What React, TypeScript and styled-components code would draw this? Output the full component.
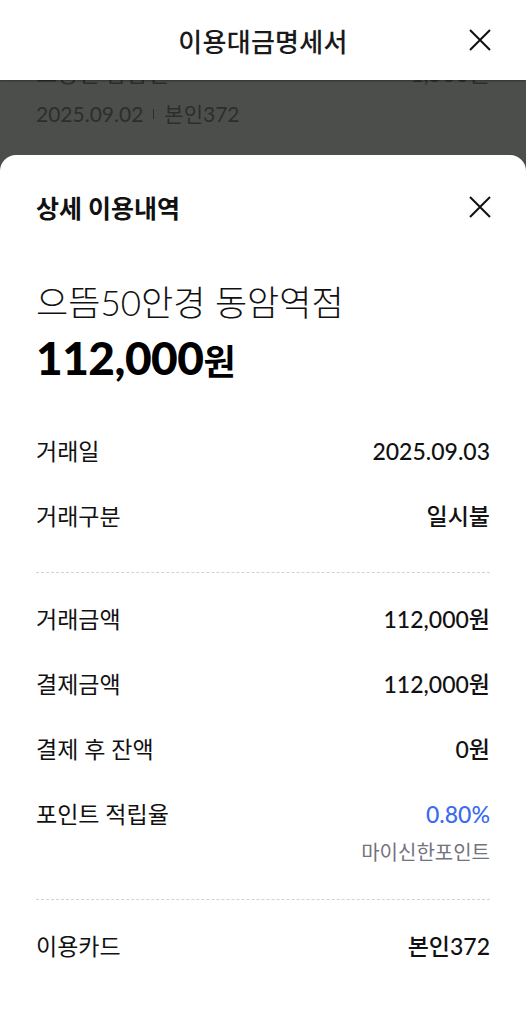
import styled, { createGlobalStyle } from "styled-components";

const GlobalStyle = createGlobalStyle`
  html, body {
    margin: 0;
    padding: 0;
    background: #4b4e4b;
  }
  body {
    font-family: Lato, "Noto Sans CJK KR", sans-serif;
    color: #111;
  }
`;

const Page = styled.div`
  width: 526px;
  height: 1024px;
  display: flex;
  flex-direction: column;
  overflow: hidden;
  background: #4b4e4b;
`;

const TopBar = styled.header`
  height: 80px;
  flex-shrink: 0;
  display: flex;
  align-items: center;
  justify-content: center;
  position: relative;
  background: #fff;
  box-shadow: 0 1px 2px rgba(0, 0, 0, 0.35);
  z-index: 2;
`;

const TopTitle = styled.h1`
  margin: 0;
  font-size: 26px;
  font-weight: 500;
  letter-spacing: 0.3px;
  color: #1a1a1a;
`;

const CloseButton = styled.button<{ top: number }>`
  position: absolute;
  right: 32px;
  top: ${(props) => props.top}px;
  width: 28px;
  height: 28px;
  padding: 0;
  border: 0;
  background: none;
  display: flex;
  align-items: center;
  justify-content: center;
`;

const Backdrop = styled.div`
  height: 75px;
  flex-shrink: 0;
  overflow: hidden;
  padding: 0 36px;
  color: #2b2e2b;
`;

const BackdropRow = styled.div`
  display: flex;
  justify-content: space-between;
  align-items: center;
  margin-top: -22px;
  line-height: 30px;
  font-size: 23px;
`;

const BackdropMeta = styled.div`
  display: flex;
  align-items: center;
  gap: 10px;
  margin-top: 12px;
  line-height: 28px;
  font-size: 21px;
`;

const Divider = styled.span`
  width: 1px;
  height: 10px;
  background: #2b2e2b;
`;

const Sheet = styled.section`
  flex: 1;
  background: #fff;
  border-radius: 16px 16px 0 0;
  padding: 0 36px;
  display: flex;
  flex-direction: column;
  position: relative;
`;

const SheetHeader = styled.div`
  height: 104px;
  display: flex;
  align-items: center;
`;

const SheetTitle = styled.h2`
  margin: 0;
  font-size: 25px;
  font-weight: 700;
  color: #111;
`;

const Merchant = styled.div`
  margin-top: 20px;
  font-size: 35px;
  font-weight: 300;
  line-height: 46px;
  color: #111;
`;

const Amount = styled.div`
  margin-top: 3px;
  margin-bottom: 12px;
  font-size: 46px;
  font-weight: 900;
  line-height: 60px;
  letter-spacing: -0.5px;
  color: #000;

  span {
    font-size: 35px;
    font-weight: 700;
  }
`;

const Group = styled.div<{ top: number; bottom: number }>`
  display: flex;
  flex-direction: column;
  gap: 35px;
  padding: ${(props) => props.top}px 0 ${(props) => props.bottom}px;
`;

const Row = styled.div`
  display: flex;
  justify-content: space-between;
  align-items: flex-start;
  line-height: 30px;
`;

const Label = styled.span`
  font-size: 23px;
  font-weight: 400;
  color: #111;
`;

const ValueCol = styled.div`
  display: flex;
  flex-direction: column;
  align-items: flex-end;
  gap: 10px;
`;

const Value = styled.span<{ accent?: boolean }>`
  font-size: 23px;
  font-weight: 500;
  color: ${(props) => (props.accent ? "#3b6bf0" : "#111")};
`;

const Note = styled.span`
  font-size: 20px;
  line-height: 26px;
  color: #737380;
`;

const Dashed = styled.div`
  height: 0;
  border-top: 1px dashed #d3d3d3;
`;

const CloseIcon = ({ size }: { size: number }) => (
  <svg width={size} height={size} viewBox="0 0 24 24" fill="none">
    <path d="M2 2L22 22M22 2L2 22" stroke="#111" strokeWidth="2" />
  </svg>
);

const App = () => {
  return (
    <Page>
      <GlobalStyle />
      <TopBar>
        <TopTitle>이용대금명세서</TopTitle>
        <CloseButton top={26}>
          <CloseIcon size={24} />
        </CloseButton>
      </TopBar>
      <Backdrop>
        <BackdropRow>
          <span>모양인 냠냠인</span>
          <span>1,500원</span>
        </BackdropRow>
        <BackdropMeta>
          <span>2025.09.02</span>
          <Divider />
          <span>본인372</span>
        </BackdropMeta>
      </Backdrop>
      <Sheet>
        <SheetHeader>
          <SheetTitle>상세 이용내역</SheetTitle>
          <CloseButton top={38}>
            <CloseIcon size={24} />
          </CloseButton>
        </SheetHeader>
        <Merchant>으뜸50안경 동암역점</Merchant>
        <Amount>
          112,000<span>원</span>
        </Amount>
        <Group top={33} bottom={41}>
          <Row>
            <Label>거래일</Label>
            <Value>2025.09.03</Value>
          </Row>
          <Row>
            <Label>거래구분</Label>
            <Value>일시불</Value>
          </Row>
        </Group>
        <Dashed />
        <Group top={31} bottom={34}>
          <Row>
            <Label>거래금액</Label>
            <Value>112,000원</Value>
          </Row>
          <Row>
            <Label>결제금액</Label>
            <Value>112,000원</Value>
          </Row>
          <Row>
            <Label>결제 후 잔액</Label>
            <Value>0원</Value>
          </Row>
          <Row>
            <Label>포인트 적립율</Label>
            <ValueCol>
              <Value accent>0.80%</Value>
              <Note>마이신한포인트</Note>
            </ValueCol>
          </Row>
        </Group>
        <Dashed />
        <Group top={31} bottom={34}>
          <Row>
            <Label>이용카드</Label>
            <Value>본인372</Value>
          </Row>
        </Group>
      </Sheet>
    </Page>
  );
};

export default App;
